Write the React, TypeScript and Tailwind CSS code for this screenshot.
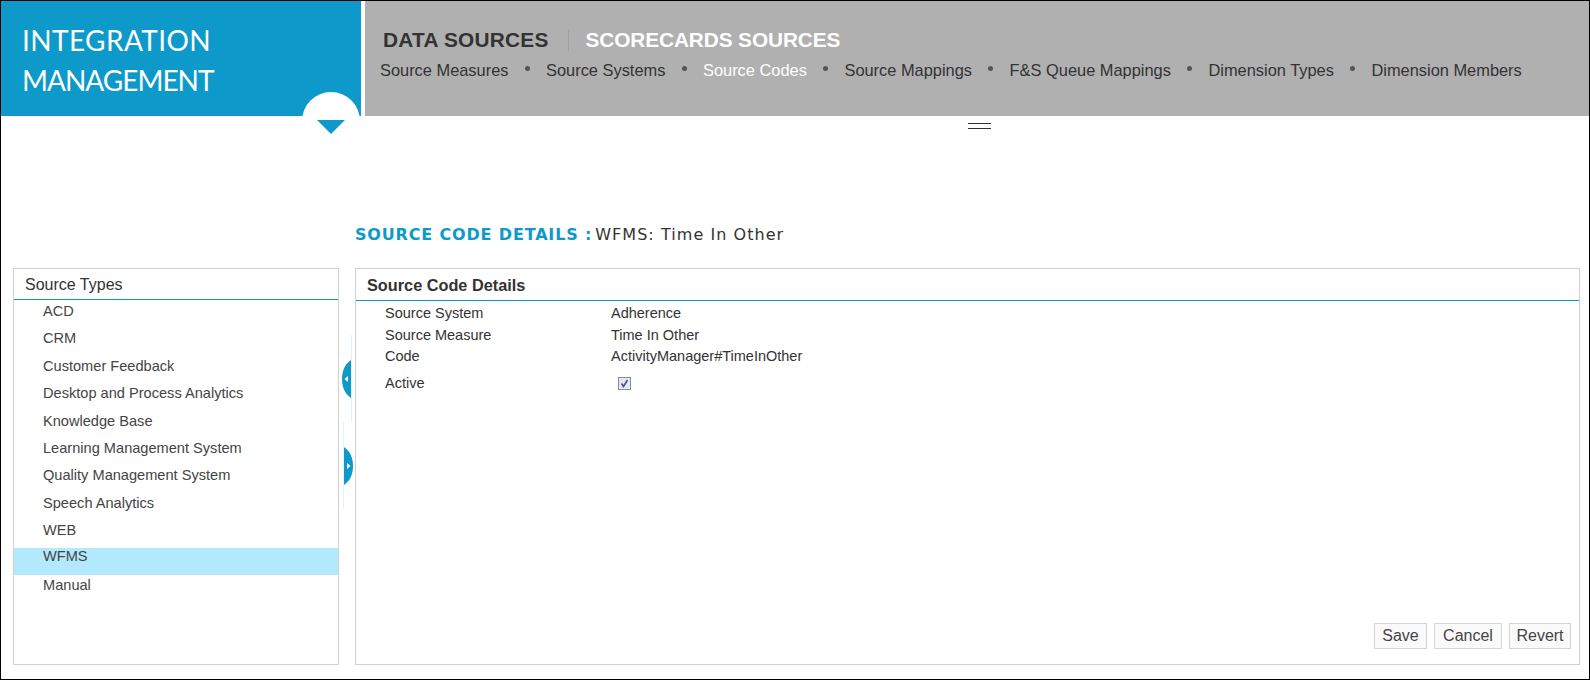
import { useState } from 'react';

const navItems = [
  'Source Measures',
  'Source Systems',
  'Source Codes',
  'Source Mappings',
  'F&S Queue Mappings',
  'Dimension Types',
  'Dimension Members',
];

const sourceTypes = [
  'ACD',
  'CRM',
  'Customer Feedback',
  'Desktop and Process Analytics',
  'Knowledge Base',
  'Learning Management System',
  'Quality Management System',
  'Speech Analytics',
  'WEB',
  'WFMS',
  'Manual',
];

const details = [
  { label: 'Source System', value: 'Adherence', cls: 'h-[22px]' },
  { label: 'Source Measure', value: 'Time In Other', cls: 'h-[21px]' },
  { label: 'Code', value: 'ActivityManager#TimeInOther', cls: 'h-[21px]' },
];

const actions = [
  { label: 'Save', cls: 'w-[53px]' },
  { label: 'Cancel', cls: 'w-[68px]' },
  { label: 'Revert', cls: 'w-[62px]' },
];

function Splitter({ dir }: { dir: 'left' | 'right' }) {
  const left = dir === 'left';
  return (
    <div className={`flex h-[87px] w-[10px] items-center ${left ? 'justify-start border-r border-[#e3f2f8]' : 'justify-start border-l border-[#e3f2f8]'}`}>
      <svg width="9" height="38" viewBox="0 0 9 38" className="shrink-0">
        {left ? (
          <>
            <path d="M9 0 C2 5 0 12 0 19 C0 26 2 33 9 38 Z" fill="#0d9acb" />
            <path d="M2.5 19 L6 16 L6 22 Z" fill="#fff" />
          </>
        ) : (
          <>
            <path d="M0 0 C7 5 9 12 9 19 C9 26 7 33 0 38 Z" fill="#0d9acb" />
            <path d="M6.5 19 L3 16 L3 22 Z" fill="#fff" />
          </>
        )}
      </svg>
    </div>
  );
}

export default function App() {
  const [active, setActive] = useState(true);

  return (
    <div className="flex h-[680px] w-[1590px] flex-col overflow-hidden border border-black bg-white font-['Liberation_Sans',Arial,sans-serif] text-[#333]">
      <header className="flex h-[115px] shrink-0">
        <div className="relative w-[360px] bg-[#0d9acb] pl-[21px] pt-[20px] font-['Lato',sans-serif] text-[28px] leading-[39.5px] text-white">
          <div className="tracking-[0.4px]">INTEGRATION</div>
          <div className="tracking-[-1px]">MANAGEMENT</div>
          <div className="absolute left-[301px] top-[91px] h-[58px] w-[58px] rounded-full bg-white" />
          <svg width="28" height="14" viewBox="0 0 28 14" className="absolute left-[316px] top-[119px]">
            <path d="M0 0 H28 L14 14 Z" fill="#0d9acb" />
          </svg>
        </div>
        <nav className="ml-[4px] flex-1 bg-[#b0b0b0]">
          <div className="flex items-center pl-[18px] pt-[27px] text-[20.8px] font-bold leading-[24px]">
            <span className="tracking-[0.25px]">DATA SOURCES</span>
            <span className="ml-[19px] mr-[17px] h-[21px] w-px bg-[#a0a0a0]" />
            <span className="tracking-[-0.1px] text-white">SCORECARDS SOURCES</span>
          </div>
          <ul className="flex items-center pl-[15px] pt-[8px] text-[16.4px] leading-[20px]">
            {navItems.map((item, i) => (
              <li key={item} className="flex items-center">
                {i > 0 && <span className="mx-[16.3px] mb-[4px] h-[5px] w-[5px] rounded-full bg-[#555]" />}
                <span className={item === 'Source Codes' ? 'text-white' : ''}>{item}</span>
              </li>
            ))}
          </ul>
        </nav>
      </header>

      <div className="flex h-[17px] shrink-0 flex-col items-center pt-[7px]">
        <div className="ml-[368px] h-[6px] w-[23px] border-y border-[#333]" />
      </div>

      <h1 className="flex h-[135px] shrink-0 items-start pl-[354px] pt-[92px] font-['DejaVu_Sans',Verdana,sans-serif] text-[16px] leading-[20px] text-[#333]">
        <span className="mr-[3px] font-bold tracking-[0.83px] text-[#0d9acb]">SOURCE CODE DETAILS :</span>
        <span className="font-normal tracking-[1.05px]">WFMS: Time In Other</span>
      </h1>

      <main className="flex h-[397px] shrink-0 pl-[12px]">
        <section className="w-[326px] border border-[#d0d0d0]">
          <h2 className="h-[31px] border-b border-[#0d9acb] pl-[11px] text-[16px] font-normal leading-[32px]">Source Types</h2>
          <ul className="pt-[1px] text-[14.6px] text-[#444]">
            {sourceTypes.map((type) => (
              <li
                key={type}
                className={`h-[27.4px] pl-[29px] ${type === 'WFMS' ? 'bg-[#b3e9fc] leading-[16px]' : 'leading-[20px]'}`}
              >
                {type}
              </li>
            ))}
          </ul>
        </section>

        <div className="flex w-[16px] shrink-0 flex-col pt-[67px]">
          <div className="ml-[3px]"><Splitter dir="left" /></div>
          <div className="ml-[4px]"><Splitter dir="right" /></div>
        </div>

        <section className="relative w-[1225px] border border-[#d0d0d0]">
          <h2 className="h-[32px] border-b border-[#0d9acb] pl-[11px] text-[16.3px] font-bold leading-[32px]">Source Code Details</h2>
          <div className="pl-[29px] pt-[2px] text-[14.5px] text-[#333]">
            {details.map((row) => (
              <div key={row.label} className={`flex leading-[20px] ${row.cls}`}>
                <span className="w-[226px]">{row.label}</span>
                <span>{row.value}</span>
              </div>
            ))}
            <div className="flex items-center pt-[6px] leading-[20px]">
              <span className="w-[233px]">Active</span>
              <label className="relative block h-[13px] w-[13px]">
                <input
                  type="checkbox"
                  checked={active}
                  onChange={(e) => setActive(e.target.checked)}
                  className="block h-[13px] w-[13px] appearance-none border border-[#8c8c8c] bg-[#e4e8f2]"
                />
                {active && (
                  <svg width="13" height="13" viewBox="0 0 13 13" className="absolute left-0 top-0">
                    <path d="M3.5 6.5 L5.5 9.5 L9.5 3" fill="none" stroke="#3f4f9f" strokeWidth="1.6" />
                  </svg>
                )}
              </label>
            </div>
          </div>
          <div className="absolute bottom-[15px] right-[8px] flex gap-[7px] text-[16px]">
            {actions.map((a) => (
              <button key={a.label} className={`h-[26px] border border-[#d4d4d4] bg-[#fafafa] leading-[24px] text-[#444] ${a.cls}`}>
                {a.label}
              </button>
            ))}
          </div>
        </section>
      </main>
    </div>
  );
}
